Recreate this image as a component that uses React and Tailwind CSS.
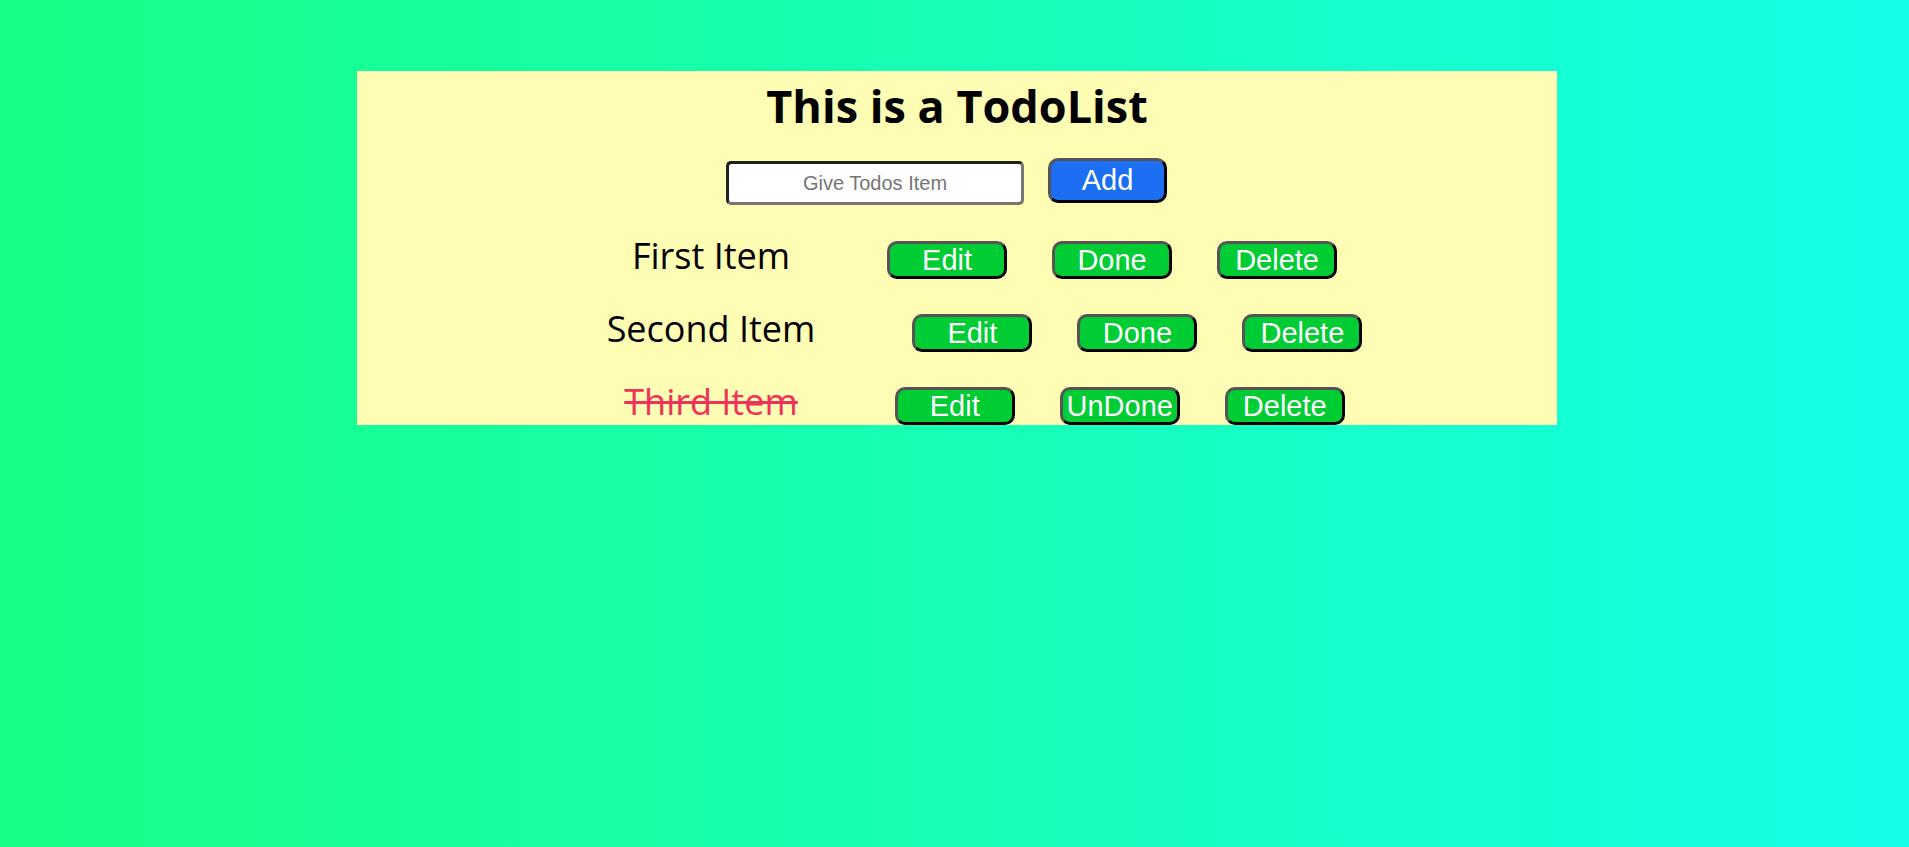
// App.jsx — simple TodoList page
import { useState } from "react";

const INITIAL = [
  { id: 1, text: "First Item", done: false },
  { id: 2, text: "Second Item", done: false },
  { id: 3, text: "Third Item", done: true },
];

function GreenButton({ children, onClick }) {
  return (
    <button
      onClick={onClick}
      className="w-[120px] h-[38px] rounded-[10px] border-[3px] border-t-[#555555] border-l-[#555555] border-b-black border-r-black bg-[#00cc33] text-white text-[29px] leading-none font-['Liberation_Sans',Arial,sans-serif] flex items-center justify-center cursor-pointer">
      {children}
    </button>
  );
}

export default function App() {
  const [todos, setTodos] = useState(INITIAL);
  const [value, setValue] = useState("");

  const addTodo = () => {
    if (!value.trim()) return;
    setTodos(t => [...t, { id: Date.now(), text: value.trim(), done: false }]);
    setValue("");
  };

  return (
    <div className="min-h-screen w-full bg-[linear-gradient(to_right,#17ff84,#15ffe8)] pt-[71px] flex justify-center pl-[5px]">
      <div className="w-[1200px] h-[354px] bg-[#fffcb3] flex flex-col items-center overflow-hidden font-['Open_Sans','Noto_Sans',sans-serif]">

        <h1 className="mt-[9px] text-[45px] leading-[52px] font-bold text-black">This is a TodoList</h1>

        {/* input row */}
        <div className="mt-[26px] flex items-start gap-[24px] pr-[21px]">
          <input
            type="text"
            placeholder="Give Todos Item"
            value={value}
            onChange={e => setValue(e.target.value)}
            className="mt-[3px] w-[298px] h-[44px] rounded-[5px] bg-white border-[3px] border-t-[#1f1f1f] border-l-[#1f1f1f] border-b-[#767676] border-r-[#767676] text-center text-[20px] text-black placeholder:text-[#757575] outline-none font-['Liberation_Sans',Arial,sans-serif]" />
          <button
            onClick={addTodo}
            className="w-[119px] h-[45px] rounded-[10px] border-[3px] border-t-[#555555] border-l-[#555555] border-b-black border-r-black bg-[#1c6ff2] text-white text-[29px] leading-none font-['Liberation_Sans',Arial,sans-serif] flex items-center justify-center cursor-pointer">
            Add
          </button>
        </div>

        {/* todo rows */}
        <div className="mt-[36px] flex flex-col gap-[35px] w-full">
          {todos.map(todo => (
            <div key={todo.id} className="h-[38px] flex items-center justify-center pl-[55px]">
              <span
                className={`relative -top-1 mr-[97px] text-[36px] leading-none ${
                  todo.done ? "text-[#f0325a] line-through" : "text-black"
                }`}>
                {todo.text}
              </span>
              <div className="flex gap-[45px]">
                <GreenButton>Edit</GreenButton>
                <GreenButton onClick={() => setTodos(ts => ts.map(t => t.id === todo.id ? { ...t, done: !t.done } : t))}>
                  {todo.done ? "UnDone" : "Done"}
                </GreenButton>
                <GreenButton onClick={() => setTodos(ts => ts.filter(t => t.id !== todo.id))}>Delete</GreenButton>
              </div>
            </div>
          ))}
        </div>
      </div>
    </div>
  );
}
